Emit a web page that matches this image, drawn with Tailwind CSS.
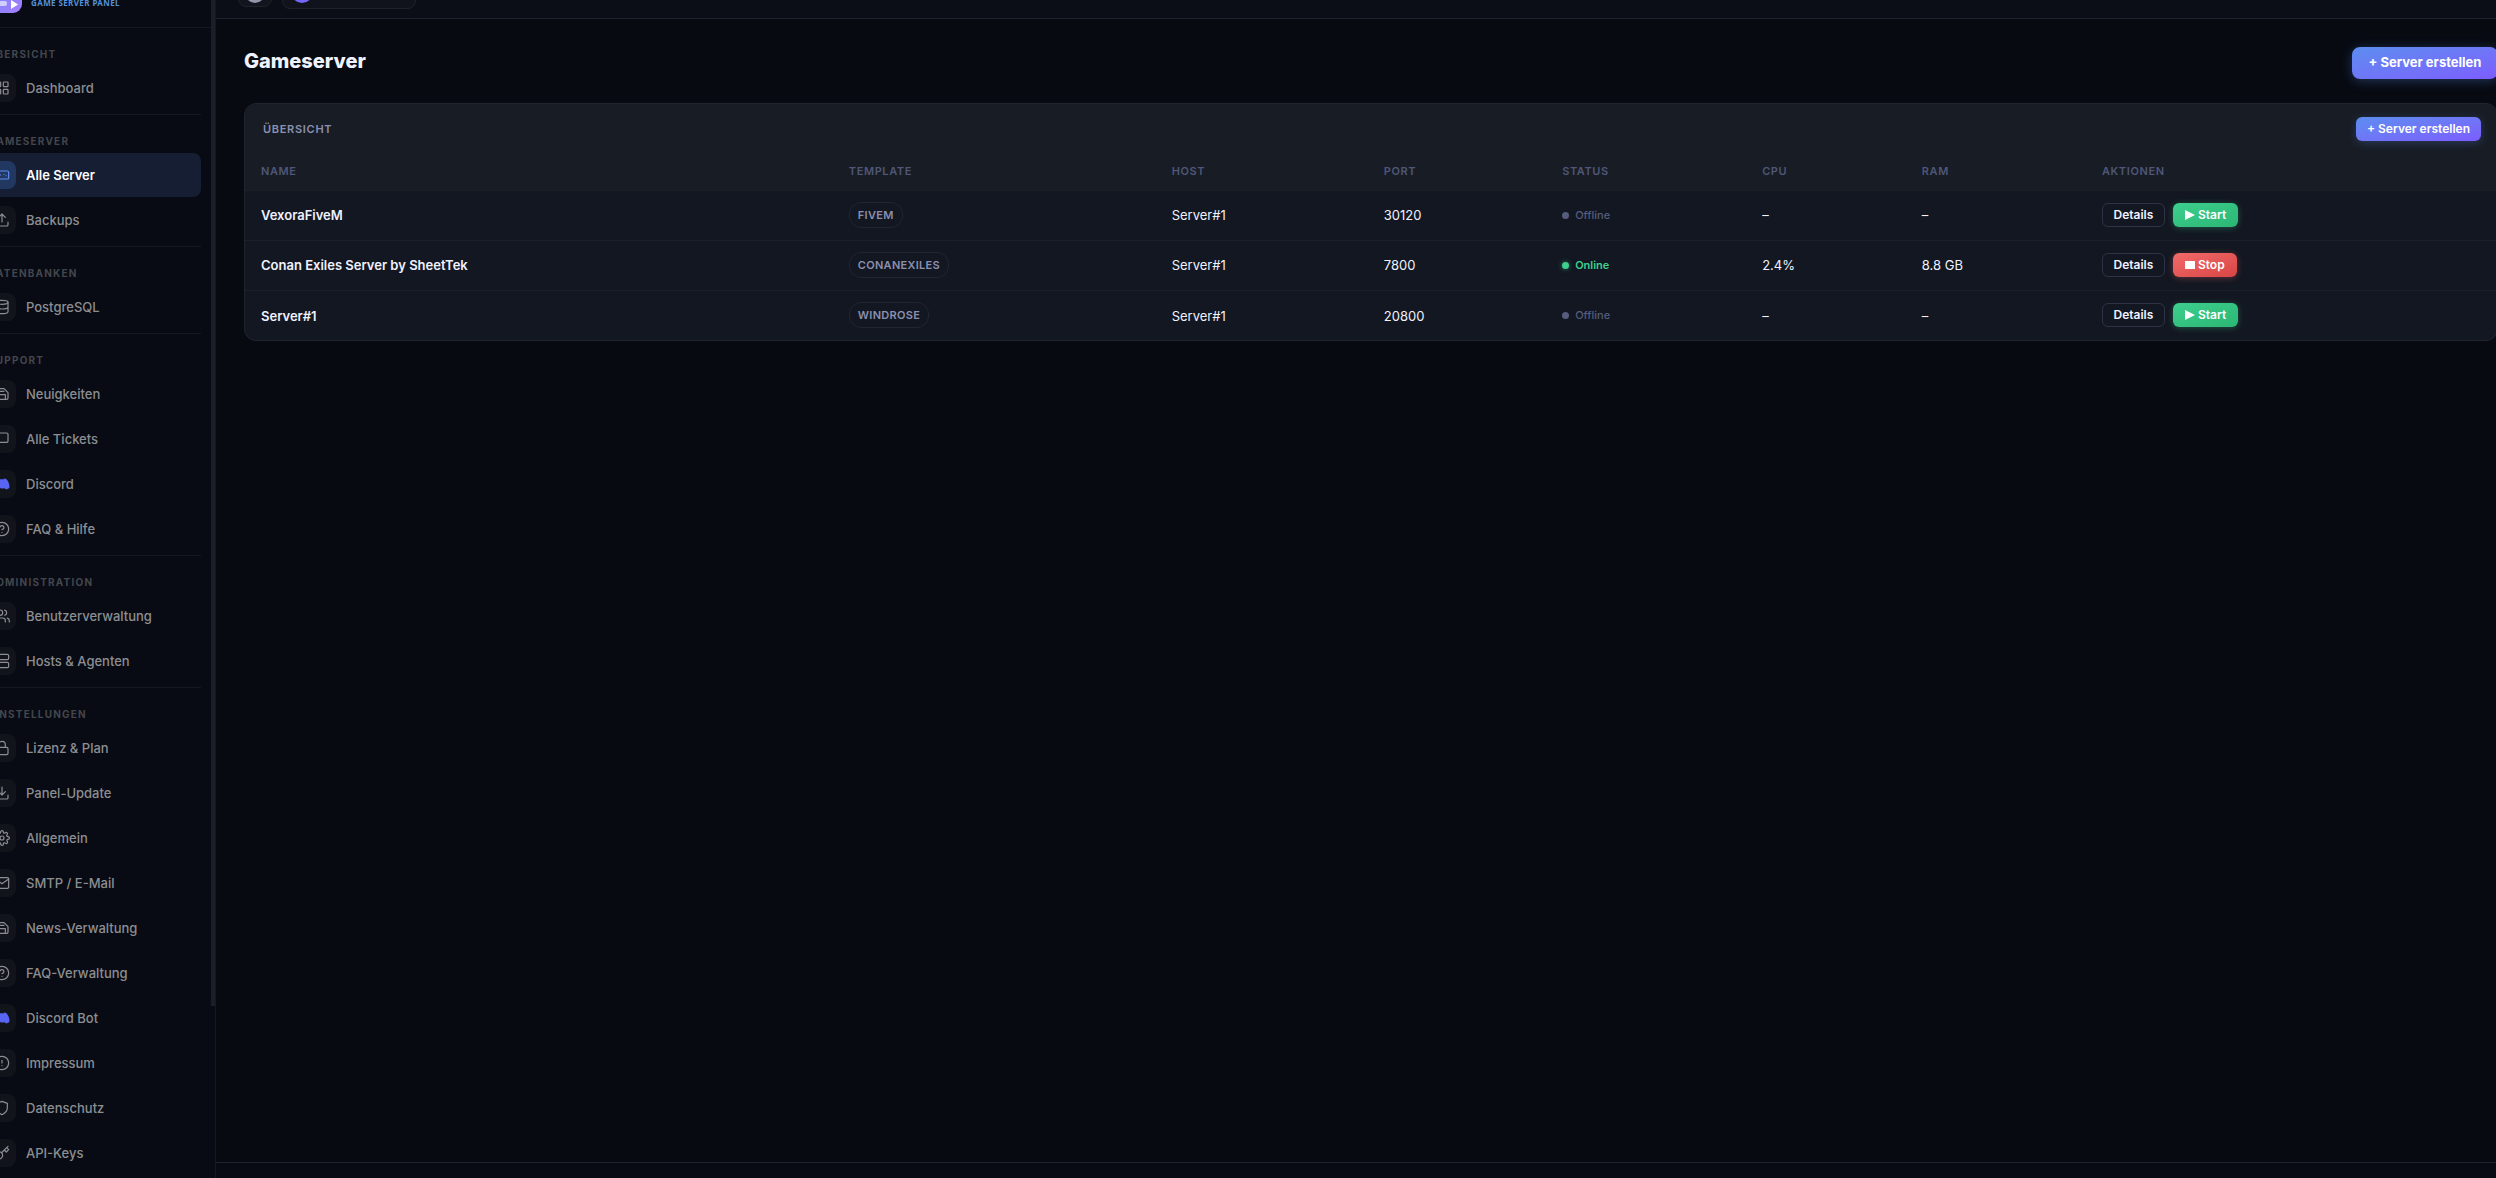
<!DOCTYPE html>
<html lang="de">
<head>
    <meta charset="UTF-8">
    <meta name="viewport" content="width=device-width, initial-scale=1.0">
    <title>Gameserver</title>
    <script src="https://cdn.jsdelivr.net/npm/@tailwindcss/browser@4"></script>
</head>
<body class="flex h-screen overflow-hidden bg-[#070a11] font-['Inter',sans-serif] text-[#f0f2ff]">

    <!-- Sidebar -->
    <aside class="relative -ml-9 flex h-screen w-63 shrink-0 flex-col overflow-hidden border-r border-[#14181f] bg-[#080b13]">
        <div class="-mt-8 flex h-15 shrink-0 items-end gap-[9px] border-b border-[#14181f] pb-3.5 pl-4">
            <svg class="size-[42px] shrink-0" viewBox="0 0 42 42">
                <defs><linearGradient id="logo" x1="0" y1="0" x2="1" y2="1"><stop stop-color="#5b8def"/><stop offset="1" stop-color="#a77dff"/></linearGradient></defs>
                <rect width="42" height="42" rx="9" fill="url(#logo)"/>
                <rect x="6" y="30" width="21" height="5" rx="2" fill="#fff" fill-opacity=".6"/>
                <path d="M31 29l7 4.500-7 4.500z" fill="#fff"/>
            </svg>
            <div class="pb-1 font-['Noto_Sans',sans-serif] text-[8px] leading-3 font-bold tracking-wider text-[#5590da]">GAME SERVER PANEL</div>
        </div>
        <nav id="nav" class="pr-[14px] pl-[10px]"></nav>
        <div class="absolute top-0 right-0 h-[1006px] w-1 bg-[#1a1e26]"></div>
    </aside>

    <div class="flex min-w-0 flex-1 flex-col">
        <!-- Topbar -->
        <header class="flex h-[19px] shrink-0 items-start gap-[10px] border-b border-[#1e222b] bg-[#0b0e16] pl-[22px]">
            <button aria-label="Design" class="-mt-7 flex h-[35px] w-[34px] items-end justify-center rounded-lg border border-[#1e222d] bg-[#12151e] pb-[3px]"><span class="size-5 rounded-full border-3 border-[#9096a8]"></span></button>
            <button aria-label="Benutzer" class="-mt-9 flex h-[45px] w-[134px] items-end rounded-lg border border-[#1e222d] bg-[#10131c] pb-[5px] pl-2"><span class="size-[22px] rounded-full bg-[#7467f8]"></span></button>
        </header>

        <main class="-mr-0.5 flex-1 pl-7">
            <div class="flex items-start justify-between pt-[28px]">
                <h1 class="text-[20px] leading-7 font-extrabold">Gameserver</h1>
                <button class="h-8 w-[146px] rounded-lg bg-linear-to-br from-[#5b8def] to-[#7c5cff] text-[13px] font-bold text-white shadow-[0_2px_12px_#5b8def55]">+ Server erstellen</button>
            </div>

            <section class="mt-6 overflow-hidden rounded-xl border border-[#20242f] bg-[#131721]">
                <div class="flex h-[50px] items-center justify-between bg-[#181c24] pr-4 pl-[18px]">
                    <h2 class="text-[11px] font-semibold tracking-[0.7px] text-[#8b90b0]">ÜBERSICHT</h2>
                    <button class="h-6 w-[125px] rounded-md bg-linear-to-br from-[#5b8def] to-[#7c5cff] text-[12px] font-semibold text-white shadow-[0_2px_10px_#5b8def44]">+ Server erstellen</button>
                </div>
                <table class="w-full table-fixed text-left text-[13px]">
                    <colgroup>
                        <col class="w-[26.1%]"><col class="w-[14.34%]"><col class="w-[9.42%]"><col class="w-[7.92%]"><col class="w-[8.88%]"><col class="w-[7.09%]"><col class="w-[8%]"><col>
                    </colgroup>
                    <thead class="bg-[#181c24] text-[11px] leading-4 tracking-[0.6px] text-[#4f5778]">
                        <tr class="h-9 border-b border-[#1b1f29]">
                            <th class="px-4 pb-0.5 font-semibold">NAME</th>
                            <th class="px-4 pb-0.5 font-semibold">TEMPLATE</th>
                            <th class="px-4 pb-0.5 font-semibold">HOST</th>
                            <th class="px-4 pb-0.5 font-semibold">PORT</th>
                            <th class="px-4 pb-0.5 font-semibold">STATUS</th>
                            <th class="px-4 pb-0.5 font-semibold">CPU</th>
                            <th class="px-4 pb-0.5 font-semibold">RAM</th>
                            <th class="px-4 pb-0.5 font-semibold">AKTIONEN</th>
                        </tr>
                    </thead>
                    <tbody id="servers"></tbody>
                </table>
            </section>
        </main>

        <footer class="h-4 shrink-0 border-t border-[#1e222b] bg-[#080b13]"></footer>
    </div>

    <script>
        const icons = {
            grid: '<rect x="3" y="3" width="7" height="7" rx="1"/><rect x="14" y="3" width="7" height="7" rx="1"/><rect x="3" y="14" width="7" height="7" rx="1"/><rect x="14" y="14" width="7" height="7" rx="1"/>',
            gamepad: '<rect x="2" y="6" width="20" height="12" rx="2"/><path d="M6 12h4M8 10v4M15 11h.01M18 13h.01"/>',
            upload: '<path d="M21 15v4a2 2 0 0 1-2 2H5a2 2 0 0 1-2-2v-4M17 8l-5-5-5 5M12 3v12"/>',
            database: '<ellipse cx="12" cy="5" rx="9" ry="3"/><path d="M21 12c0 1.66-4 3-9 3s-9-1.34-9-3M3 5v14c0 1.66 4 3 9 3s9-1.34 9-3V5"/>',
            news: '<path d="M19 20H5a2 2 0 0 1-2-2V6a2 2 0 0 1 2-2h10l6 6v8a2 2 0 0 1-2 2z"/><path d="M17 20v-7H7v7M7 4v4h8"/>',
            ticket: '<path d="M21 15a2 2 0 0 1-2 2H7l-4 4V5a2 2 0 0 1 2-2h14a2 2 0 0 1 2 2z"/>',
            help: '<circle cx="12" cy="12" r="10"/><path d="M9.09 9a3 3 0 0 1 5.83 1c0 2-3 3-3 3M12 17h.01"/>',
            users: '<path d="M17 21v-2a4 4 0 0 0-4-4H5a4 4 0 0 0-4 4v2"/><circle cx="9" cy="7" r="4"/><path d="M23 21v-2a4 4 0 0 0-3-3.87M16 3.13a4 4 0 0 1 0 7.75"/>',
            server: '<rect x="2" y="2" width="20" height="8" rx="2"/><rect x="2" y="14" width="20" height="8" rx="2"/><path d="M6 6h.01M6 18h.01"/>',
            lock: '<rect x="3" y="11" width="18" height="11" rx="2"/><path d="M7 11V7a5 5 0 0 1 10 0v4"/>',
            download: '<path d="M21 15v4a2 2 0 0 1-2 2H5a2 2 0 0 1-2-2v-4M7 10l5 5 5-5M12 15V3"/>',
            gear: '<circle cx="12" cy="12" r="3"/><path d="M19.4 15a1.65 1.65 0 0 0 .33 1.82l.06.06a2 2 0 1 1-2.83 2.83l-.06-.06a1.65 1.65 0 0 0-2.82 1.17V21a2 2 0 0 1-4 0v-.09a1.65 1.65 0 0 0-2.9-1.18l-.06.06a2 2 0 1 1-2.83-2.83l.06-.06A1.65 1.65 0 0 0 3.09 14H3a2 2 0 0 1 0-4h.09a1.65 1.65 0 0 0 1.18-2.82l-.06-.06a2 2 0 1 1 2.83-2.83l.06.06A1.65 1.65 0 0 0 10 3.09V3a2 2 0 0 1 4 0v.09a1.65 1.65 0 0 0 2.82 1.18l.06-.06a2 2 0 1 1 2.83 2.83l-.06.06A1.65 1.65 0 0 0 20.91 10H21a2 2 0 0 1 0 4h-.09a1.65 1.65 0 0 0-1.51 1z"/>',
            mail: '<rect x="2" y="4" width="20" height="16" rx="2"/><path d="M22 6l-10 7L2 6"/>',
            info: '<circle cx="12" cy="12" r="10"/><path d="M12 8v4M12 16h.01"/>',
            shield: '<path d="M12 22s8-4 8-10V5l-8-3-8 3v7c0 6 8 10 8 10z"/>',
            key: '<path d="M21 2l-2 2m-7.61 7.61a5.5 5.5 0 1 1-7.78 7.78 5.5 5.5 0 0 1 7.78-7.78zm0 0L15.5 7.5m0 0l3 3L22 7l-3-3m-3.5 3.5L19 4"/>',
            discord: '<path stroke="none" fill="#5865f2" d="M19.500 5.500C18 4.500 16.500 4 15 3.800l-.7 1.400c-1.500-.2-3.100-.2-4.600 0L9 3.800C7.500 4 6 4.500 4.500 5.500 1.500 9.500.5 13.500 1 18c1.800 1.300 3.500 2 5.500 2.300l1.200-2.100c2.800.6 5.800.6 8.600 0l1.200 2.100c2-.3 3.700-1 5.500-2.300.5-4.500-.5-8.500-3.500-12.500z"/>'
        };

        const groups = [
            ['Übersicht', [['Dashboard', 'grid']]],
            ['Gameserver', [['Alle Server', 'gamepad'], ['Backups', 'upload']]],
            ['Datenbanken', [['PostgreSQL', 'database']]],
            ['Support', [['Neuigkeiten', 'news'], ['Alle Tickets', 'ticket'], ['Discord', 'discord'], ['FAQ & Hilfe', 'help']]],
            ['Administration', [['Benutzerverwaltung', 'users'], ['Hosts & Agenten', 'server']]],
            ['Einstellungen', [['Lizenz & Plan', 'lock'], ['Panel-Update', 'download'], ['Allgemein', 'gear'], ['SMTP / E-Mail', 'mail'], ['News-Verwaltung', 'news'], ['FAQ-Verwaltung', 'help'], ['Discord Bot', 'discord'], ['Impressum', 'info'], ['Datenschutz', 'shield'], ['API-Keys', 'key']]]
        ];

        document.getElementById('nav').innerHTML = groups.map(([title, items], i) => `
            <div class="${i ? 'mt-1 border-t border-[#14181f]' : ''}">
                <h3 class="px-[14px] pt-[18px] pb-1 text-[10px] leading-4 font-bold tracking-[1.2px] text-[#43464d] uppercase">${title}</h3>
                <div class="flex flex-col gap-px">
                    ${items.map(([label, icon]) => {
                        const active = label === 'Alle Server';
                        return `<a href="#" class="flex h-11 items-center gap-[10px] rounded-lg px-[14px] text-[13px] ${active ? 'bg-[#151e33] font-semibold text-white' : 'font-medium text-[#8c8e92]'}">
                            <span class="flex size-7 items-center justify-center rounded-lg ${active ? 'bg-[#223860] text-[#5b8def]' : 'bg-[#11141b]'}">
                                <svg class="size-4" viewBox="0 0 24 24" fill="none" stroke="currentColor" stroke-width="1.800" stroke-linecap="round" stroke-linejoin="round">${icons[icon]}</svg>
                            </span><span class="pt-0.5">${label.replace('&', '&amp;')}</span></a>`;
                    }).join('')}
                </div>
            </div>`).join('');

        const servers = [
            { name: 'VexoraFiveM', template: 'FIVEM', port: 30120, online: false, cpu: '–', ram: '–' },
            { name: 'Conan Exiles Server by SheetTek', template: 'CONANEXILES', port: 7800, online: true, cpu: '2.4%', ram: '8.8 GB' },
            { name: 'Server#1', template: 'WINDROSE', port: 20800, online: false, cpu: '–', ram: '–' }
        ];

        document.getElementById('servers').innerHTML = servers.map(s => `
            <tr class="h-[50px] border-b border-[#1b1f2a] last:border-0">
                <td class="px-4 pt-0.5 font-semibold">${s.name}</td>
                <td class="px-4"><span class="inline-flex h-[26px] items-center rounded-xl border border-[#212534] px-2 text-[11px] font-semibold tracking-[0.3px] text-[#8b90b0]">${s.template}</span></td>
                <td class="px-4 pt-0.5">Server#1</td>
                <td class="px-4 pt-0.5">${s.port}</td>
                <td class="px-4"><span class="flex items-center gap-[6px] text-[11px] ${s.online ? 'font-semibold text-[#3ecf8e]' : 'font-medium text-[#555c7c]'}"><span class="size-[7px] rounded-full ${s.online ? 'bg-[#3ecf8e] shadow-[0_0_5px_#3ecf8e88]' : 'bg-[#555c7c]'}"></span>${s.online ? 'Online' : 'Offline'}</span></td>
                <td class="px-4 pt-0.5">${s.cpu}</td>
                <td class="px-4 pt-0.5">${s.ram}</td>
                <td class="px-4">
                    <div class="flex gap-2 text-[12px] font-semibold">
                        <button class="h-6 w-[63px] rounded-md border border-[#2e3246]">Details</button>
                        <button class="flex h-6 items-center gap-[3px] rounded-md px-3 text-white ${s.online ? 'bg-linear-to-br from-[#f16a6a] to-[#d94545] shadow-[0_1px_6px_#f8717155]' : 'bg-linear-to-br from-[#3ecf8e] to-[#2bb673] shadow-[0_1px_6px_#3ecf8e55]'}">
                            <svg class="size-[10px]" viewBox="0 0 10 10" fill="currentColor">${s.online ? '<path d="M0 1h10v8H0z"/>' : '<path d="M0 0l10 5-10 5z"/>'}</svg>${s.online ? 'Stop' : 'Start'}</button>
                    </div>
                </td>
            </tr>`).join('');
    </script>
</body>
</html>
